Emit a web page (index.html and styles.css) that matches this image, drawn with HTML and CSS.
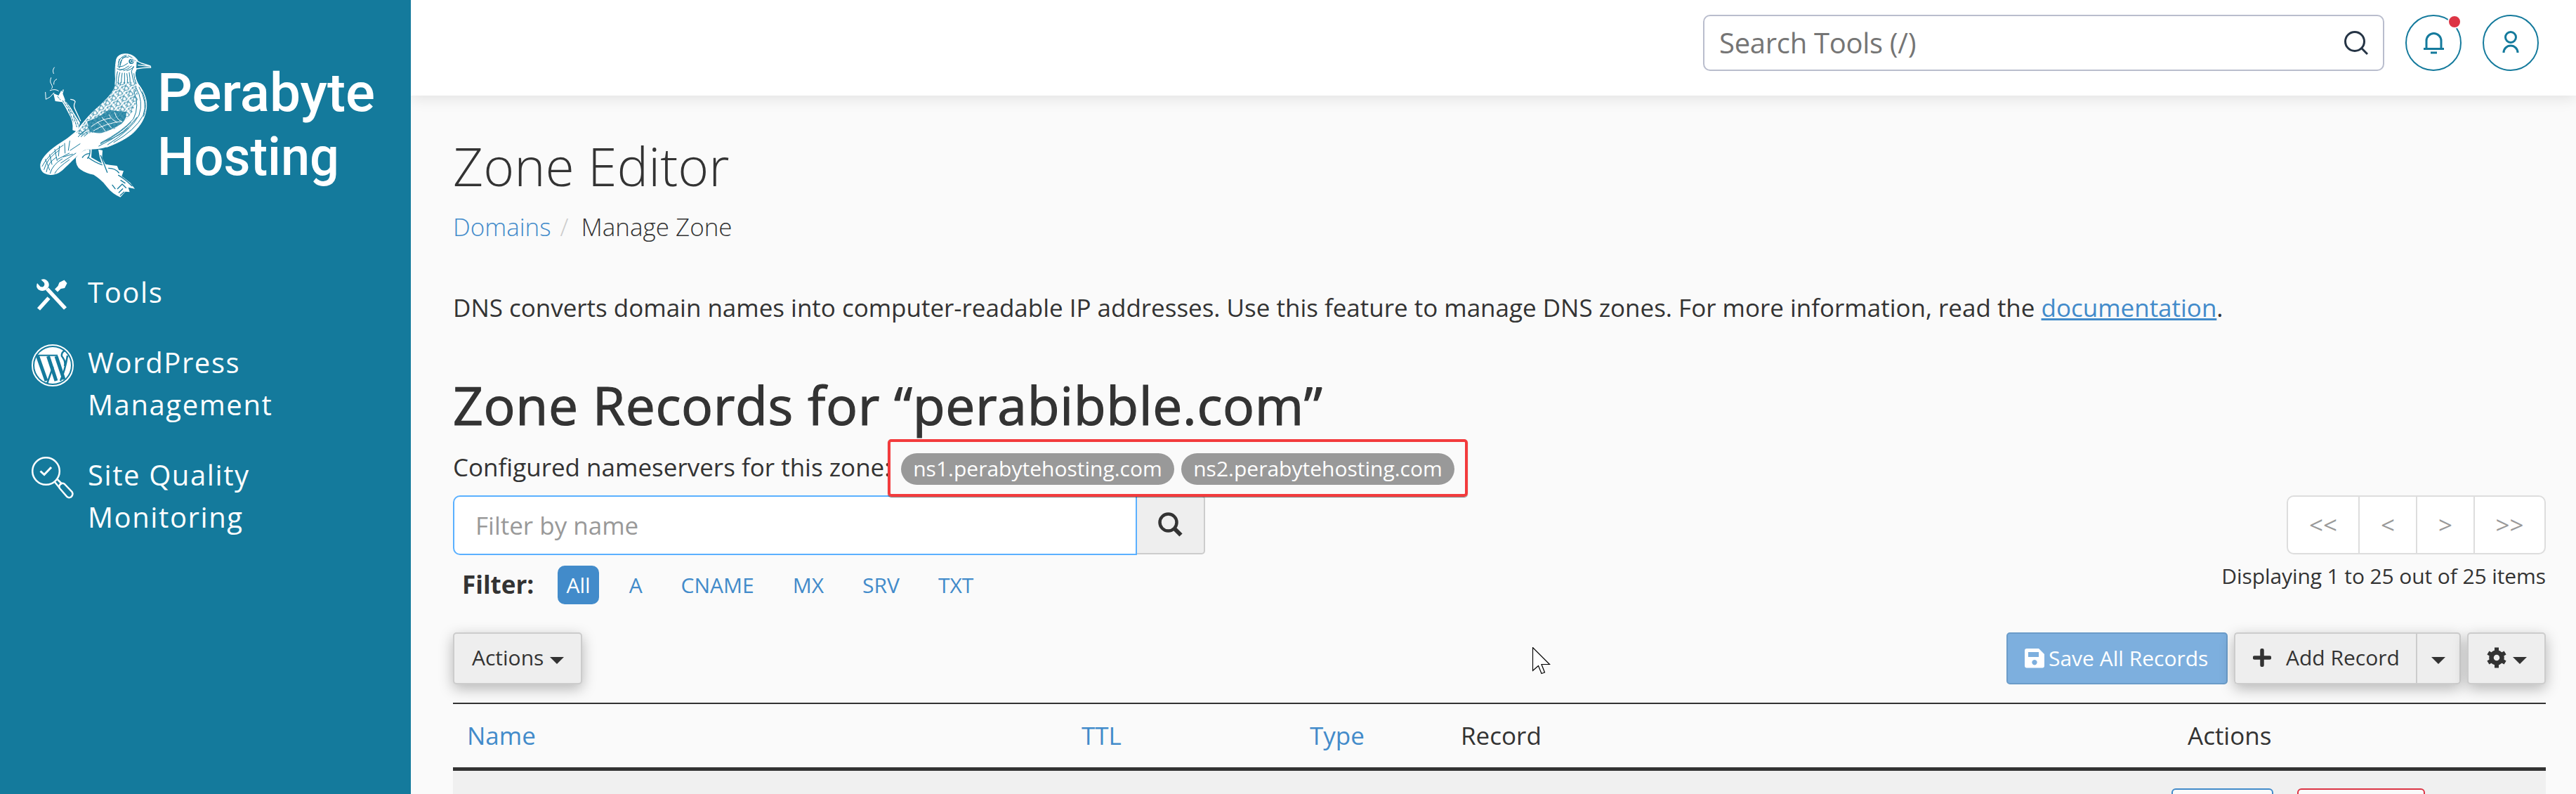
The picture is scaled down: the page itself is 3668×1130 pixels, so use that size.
FILE: index.html
```
<!DOCTYPE html>
<html lang="en">
<head>
<meta charset="utf-8">
<title>Zone Editor</title>
<link rel="stylesheet" href="styles.css">
</head>
<body>
<div class="app">
  <aside class="sidebar">
    <svg class="logo" viewBox="0 0 585 300" width="585" height="300" role="img" aria-label="Perabyte Hosting">
      <defs>
        <pattern id="feather" width="34" height="30" patternUnits="userSpaceOnUse" patternTransform="rotate(-38)">
          <path d="M1 4q8-6 15 1t15-2M3 13q6 5 12-1t14 4M0 22q9-5 14 2t17-1M9 0l-3 9M22 3l4 9M12 14l-4 10M27 15l-3 12" fill="none" stroke="#147a9c" stroke-width="2.6"/>
        </pattern>
        <clipPath id="body-clip">
          <path d="M346 20C346-2 366-10 388-10C412-9 428 3 438 18L438 50C424 66 426 84 440 118C466 152 482 190 474 230C466 278 438 306 424 322C398 348 350 372 306 388C262 404 222 392 206 404C180 424 160 446 130 474C110 496 86 510 60 506C34 504 20 488 22 462C28 428 66 396 110 368C140 350 154 338 176 318C200 288 230 250 262 222C296 190 326 164 338 134C344 104 342 60 346 20Z"/>
        </clipPath>
      </defs>
      <g transform="translate(50 80) scale(.33333)" stroke-linecap="round" stroke-linejoin="round">
        <g fill="none" stroke="#fff">
          <path d="M82 48q-10 12-3 26M68 92q-7 18 2 28 8 16 0 18M92 98q-14 6-12 22M44 154l2 30 18-10 16-18M64 146q22-8 36 2" stroke-width="3"/>
          <path d="M86 168l26 10 8-34M112 150l14 36M152 184q24 4 18 14-8 12 2 32l22 46" stroke-width="4"/>
        </g>
        <path d="M78 158L100 168 112 146 124 184Q152 218 162 236L192 284 180 322 160 316Q164 278 144 246Q130 218 116 196L86 192Z" fill="#fff"/>
        <path d="M96 172l12 14M118 190l38 56M128 190l46 78M142 228l22 52M164 256l14 46M176 270l10 28" stroke="#147a9c" stroke-width="3" fill="none" stroke-dasharray="9 5"/>
        <path d="M174 434Q188 410 220 398L242 396 240 432 286 458 318 464 350 468 358 486 378 490 370 512 406 540 426 566 398 560 404 580 386 578 364 602Q330 588 310 562Q288 530 250 506Q216 500 194 484Q172 470 174 434Z" fill="#fff"/>
        <path d="M234 400q2 24-10 36M226 432q30 22 60 32M202 432q10-14 28-16M314 478q28 0 44 20M356 508q30 18 58 46M352 566l20-20 16 16M358 582l16-16M364 594l16-14M366 530l18 12M330 550l12 16" stroke="#147a9c" stroke-width="4" fill="none"/>
        <path d="M270 398l18 4-2 32 20 38 18 50-26-28-22-62z" fill="#fff"/>
        <path d="M280 424l28 72" stroke="#147a9c" stroke-width="4"/>
        <g clip-path="url(#body-clip)">
          <rect x="10" y="-20" width="480" height="540" fill="#fff"/>
          <path d="M216 275Q260 220 320 160L340 110 430 110 440 180 410 250 340 310 230 330 200 340 176 326Z" fill="url(#feather)"/>
          <path d="M222 278Q270 264 312 230Q348 232 388 238Q394 266 370 288Q330 314 284 328Q250 330 232 318Z" fill="#147a9c" opacity=".8"/>
          <path d="M240 300q40-30 82-36M250 318q50-32 120-40M268 282q20 18 32 38M316 250q10 22 34 32M340 240q6 28 30 40M286 262q20 20 40 44" fill="none" stroke="#fff" stroke-width="3"/>
          <g fill="none" stroke="#147a9c" stroke-width="3">
            <path d="M352 66q-8 34-4 56M362 70q-10 30-6 50M372 72q-4 26-4 42M382 72v44M392 74q4 20 2 40M402 70q4 24 4 44M412 66q4 26 10 44M422 74q0 20 10 44"/>
            <path d="M432 136q32 56 12 116-34 62-134 126M444 132q38 64 18 120-34 64-126 116M422 150q26 62-2 118-50 56-140 102M458 152q26 56 6 104M434 262q-42 64-162 122M410 282q-46 48-130 92M398 306q-34 34-96 56"/>
            <path d="M356 26q8-26 34-30M362 36q4-28 26-34M356 46q22 0 40-16M362 60q20-4 38-18M378 62q16-4 34-20M392 62q16-4 30-16M398-2q20 6 30 22M360 12l-6 32M370 16l-10 34M350 54q14 6 30 2M372 8q12-10 26-4M420 44l-8 20"/>
            <path d="M188 332q22-4 42-30M184 344l24-24M196 344l22-20M210 342l16-14"/>
            <path d="M30 470q26-52 90-90M38 484q12-48 64-82M48 494q6-40 42-62M64 500q12-40 52-62M84 500q12-24 62-58M44 440l18 46M62 420l10 42M84 398l10 48M104 384l-4 42M126 372l2 42M148 362l-6 40M96 440l50-26M110 456l64-42M150 402l42-28M120 430l40-12"/>
          </g>
        </g>
        <path d="M346 124C340 70 342 48 346 20C350-2 366-10 388-10C412-9 428 3 438 18L436 28 432 54Q418 86 440 118C466 152 482 190 474 230C466 278 438 306 424 322C398 348 350 372 306 388" fill="none" stroke="#fff" stroke-width="3"/>
        <path d="M434 20l20 10 38 12 2 6-34 2-28 4" fill="#147a9c" stroke="#fff" stroke-width="4"/>
        <path d="M440 38q28 4 48 4" stroke="#fff" stroke-width="4"/>
        <circle cx="411" cy="22" r="13" fill="#147a9c" stroke="#fff" stroke-width="4"/>
        <circle cx="413" cy="21" r="6" fill="none" stroke="#fff" stroke-width="3"/>
      </g>
      <g class="logo-text">
        <text x="224" y="157.500" textLength="310" lengthAdjust="spacingAndGlyphs">Perabyte</text>
        <text x="224" y="248.500" textLength="259" lengthAdjust="spacingAndGlyphs">Hosting</text>
      </g>
    </svg>
    <nav class="nav">
      <a class="nav-item">
        <svg width="60" height="60" viewBox="0 0 60 60" fill="none">
          <path d="M22 21L48 49" stroke="#fff" stroke-width="5.500"/>
          <path d="M8 13Q5.500 18 9.500 22Q15 26 21 22Q27 17 23.500 11Q19.500 5.500 13.500 8L18 12.500Q19.500 16.500 15.500 18.500L12.500 18Z" fill="#fff"/>
          <path d="M24.500 34L10 50" stroke="#fff" stroke-width="5.500"/>
          <path d="M33 21.500L37.500 17 39.500 12 46.500 8.500 50.500 13 47 20 41.500 21 37 25.500Z" fill="#fff"/>
        </svg>
        <span>Tools</span>
      </a>
      <a class="nav-item">
        <svg width="60" height="60" viewBox="0 0 60 60">
          <circle cx="30" cy="30" r="29" fill="none" stroke="#fff" stroke-width="2"/>
          <circle cx="30" cy="30" r="26" fill="#fff"/>
          <g fill="none" stroke="#147a9c">
            <path d="M8.500 16.500L21 52M23.500 17L35 52M35 17L46 50" stroke-width="5"/>
            <path d="M6 15.800h15M19 15.800h18" stroke-width="2"/>
            <path d="M30.500 32L22 56M51 16Q48 36 41 52M47 9Q42 12 43 17Q49 24 47 31" stroke-width="2.500"/>
          </g>
        </svg>
        <span>WordPress Management</span>
      </a>
      <a class="nav-item">
        <svg width="60" height="60" viewBox="0 0 60 60" fill="none" stroke="#fff" stroke-width="2.500">
          <circle cx="20.500" cy="20.500" r="19.300"/>
          <path d="M12.500 20.500L18 25.500 28 15" stroke-width="3"/>
          <path d="M33 36L39.500 44M37 32.500L43.500 39"/>
          <path d="M40 45L50.500 57Q53 59 56 57.500Q60 54 57.500 50L46.500 38.500Q43.500 37 41 39Q38 42 40 45Z"/>
        </svg>
        <span>Site Quality Monitoring</span>
      </a>
    </nav>
  </aside>

  <div class="page">
    <header class="topbar">
      <div class="search">
        <span>Search Tools (/)</span>
        <svg width="34" height="34" viewBox="0 0 34 34" fill="none" stroke="#253445" stroke-width="3">
          <circle cx="15" cy="15" r="13.500"/><path d="M24.500 24.500L33 33"/>
        </svg>
      </div>
      <div class="round">
        <svg width="80" height="80" viewBox="0 0 80 80" fill="none" stroke="#147a9c" stroke-width="3">
          <path d="M30 48V37a10.500 10.500 0 0 1 21 0V48M26 48.500H55M36 54H45"/>
        </svg>
        <i class="dot"></i>
      </div>
      <div class="round">
        <svg width="80" height="80" viewBox="0 0 80 80" fill="none" stroke="#147a9c" stroke-width="3">
          <circle cx="40" cy="32" r="7.500"/><path d="M30 54a10 10 0 0 1 20 0"/>
        </svg>
      </div>
    </header>

    <main class="main">
      <h1>Zone Editor</h1>
      <div class="crumbs"><a>Domains</a><i>/</i><span>Manage Zone</span></div>
      <p class="intro">DNS converts domain names into computer-readable IP addresses. Use this feature to manage DNS zones. For more information, read the <a>documentation</a>.</p>
      <h2>Zone Records for “perabibble.com”</h2>
      <div class="servers">
        <span class="servers-label">Configured nameservers for this zone:</span>
        <div class="servers-list">
          <span class="pill">ns1.perabytehosting.com</span>
          <span class="pill">ns2.perabytehosting.com</span>
        </div>
      </div>

      <div class="find">
        <div class="find-group">
          <div class="find-input">Filter by name</div>
          <div class="find-btn">
            <svg width="36" height="36" viewBox="0 0 36 36" fill="none" stroke="#333">
              <circle cx="14.500" cy="14.500" r="12" stroke-width="4.500"/><path d="M23 23L32.500 32.500" stroke-width="6"/>
            </svg>
          </div>
        </div>
        <div class="pager"><span class="wide">&lt;&lt;</span><span>&lt;</span><span>&gt;</span><span class="wide">&gt;&gt;</span></div>
      </div>

      <div class="filters">
        <b>Filter:</b>
        <div class="filter-list"><a class="on">All</a><a>A</a><a>CNAME</a><a>MX</a><a>SRV</a><a>TXT</a></div>
        <span class="count">Displaying 1 to 25 out of 25 items</span>
      </div>

      <div class="toolbar">
        <div class="btn actions">Actions<i class="caret"></i></div>
        <div class="btn save">
          <svg width="28" height="28" viewBox="0 0 28 28"><path fill="#fff" fill-rule="evenodd" d="M3 0H20L28 8V24.500Q28 27.500 25 27.500H3Q0 27.500 0 24.500V3Q0 0 3 0ZM5 5V12H20V5ZM14 16a3.700 3.700 0 1 0 .01 0Z"/></svg>
          <span>Save All Records</span>
        </div>
        <div class="split">
          <div class="btn add">
            <svg width="26" height="26" viewBox="0 0 26 26"><path d="M2.500 13H23.500M13 2.500V23.500" stroke="#333" stroke-width="5.500" stroke-linecap="round"/></svg>
            <span>Add Record</span>
          </div>
          <div class="btn drop"><i class="caret"></i></div>
        </div>
        <div class="btn gear">
          <svg width="28" height="30" viewBox="0 -1 28 30">
            <g fill="none" stroke="#333"><circle cx="14" cy="14" r="7.500" stroke-width="6.500"/>
            <path d="M14 -.5V5M14 23V28.500M1.900 7L6.200 9.500M21.800 18.500L26.100 21M1.900 21L6.200 18.500M21.800 9.500L26.100 7" stroke-width="6"/></g>
          </svg>
          <i class="caret"></i>
        </div>
      </div>

      <div class="table">
        <div class="thead">
          <a>Name</a><a>TTL</a><a>Type</a><span>Record</span><span>Actions</span>
        </div>
        <div class="row"><div class="row-btn edit"></div><div class="row-btn delete"></div></div>
      </div>
    </main>
  </div>
</div>
<svg class="cursor" width="26" height="40" viewBox="0 0 26 40"><path d="M.5 .5V33.500L8.500 26.500 13 37.500 17.500 36 13 24.500H24.500Z" fill="#fff" stroke="#000" stroke-width="1.200"/></svg>
</body>
</html>
```
FILE: styles.css
```
* { box-sizing: border-box; }
html, body { margin: 0; height: 1130px; overflow: hidden; }
body { background: #fafafa; color: #333; font: 35px/50px "Open Sans", "Noto Sans", sans-serif; }
a { color: #428bca; }
h1, h2, p { margin: 0; }
i { font-style: normal; }
svg { display: block; flex: none; }

.app { display: flex; height: 1130px; }

/* Sidebar */
.sidebar { position: relative; z-index: 1; width: 585px; flex: none; background: #147a9c; color: #fff; }
.logo-text { fill: #fff; font: 500 76px Roboto, sans-serif; }
.nav { display: flex; flex-direction: column; gap: 40px; padding: 86px 45px 0; }
.nav-item { display: flex; gap: 20px; color: #fff; font-size: 40px; line-height: 60px; letter-spacing: 1.6px; }
.nav-item span { width: 300px; }
.nav-item svg { margin: 4px 0 -4px; }

/* Top bar */
.page { flex: 1; min-width: 0; }
.topbar { display: flex; justify-content: flex-end; align-items: flex-start; gap: 30px; height: 136px; padding: 21px 53px 0 0; background: #fff; box-shadow: 0 4px 20px rgba(0, 0, 0, .1); }
.search { display: flex; align-items: center; justify-content: space-between; width: 970px; height: 80px; padding: 0 21px; border: 2px solid #b9bdcd; border-radius: 10px; color: #757575; font-size: 40px; letter-spacing: -.3px; }
.round { position: relative; width: 80px; height: 80px; border: 2px solid #147a9c; border-radius: 50%; }
.round svg { margin: -2px; }
.dot { position: absolute; top: -2px; right: -2px; width: 20px; height: 20px; border: 2px solid #fff; border-radius: 50%; background: #dc3545; }

/* Content */
.main { padding: 59px 43px 0 60px; }
h1 { font-size: 75px; line-height: 82px; font-weight: 300; }
.crumbs { display: flex; margin-top: 21px; font-weight: 300; }
.crumbs i { color: #ccc; padding: 0 18px 0 13px; }
.intro { margin-top: 65px; letter-spacing: -.015px; }
.intro a { text-decoration: underline; }
h2 { margin-top: 72px; font-size: 75px; line-height: 82px; font-weight: 400; letter-spacing: .63px; -webkit-text-stroke: 1.2px #333; }
.servers { display: flex; height: 88px; padding-top: 8px; }
.servers-label { width: 619px; padding-top: 15px; white-space: nowrap; }
.servers-list { display: flex; gap: 10px; width: 826px; height: 82px; padding: 16px 15px; border: 4px solid #f33b3d; border-radius: 5px; box-shadow: 0 1px 1px rgba(0, 0, 0, .5); position: relative; z-index: 1; }
.pill { width: 389px; height: 45px; border-radius: 23px; background: #999; color: #fff; font-size: 30px; line-height: 44px; text-align: center; }

.find { display: flex; justify-content: space-between; height: 85px; }
.find-group { display: flex; }
.find-input { width: 974px; height: 85px; padding-left: 30px; border: 2px solid #5ab0ff; border-radius: 10px 0 0 10px; background: #fff; color: #999; line-height: 82px; }
.find-btn { display: flex; align-items: center; justify-content: center; width: 97px; height: 84px; border: 2px solid #ccc; border-left: 0; border-radius: 0 5px 5px 0; background: #eee; }
.pager { display: flex; height: 84px; border: 2px solid #ddd; border-radius: 10px; background: #fff; color: #999; font-size: 35px; line-height: 80px; text-align: center; }
.pager span { width: 82px; border-left: 2px solid #ddd; }
.pager .wide { width: 101px; }
.pager span:first-child { width: 100px; border-left: 0; }

.filters { display: flex; align-items: center; height: 55px; margin-top: 15px; }
.filters b { width: 149px; padding-left: 13px; margin-top: -2px; }
.filter-list { display: flex; gap: 30px; }
.filter-list a { padding: 0 12.5px; border-radius: 10px; font-size: 30px; line-height: 55px; }
.filter-list .on { background: #428bca; color: #fff; }
.count { margin-left: auto; font-size: 30px; letter-spacing: -.1px; padding-bottom: 25px; }

.toolbar { display: flex; margin-top: 40px; height: 74px; }
.btn { display: flex; align-items: center; height: 74px; padding-bottom: 2px; border: 2px solid #ccc; border-radius: 5px; background: #eee; font-size: 30px; line-height: 68px; box-shadow: 0 6px 20px rgba(0, 0, 0, .28); white-space: nowrap; }
.caret { width: 0; height: 0; margin-top: 7px; border: 10px solid transparent; border-top-color: #333; border-bottom: 0; }
.actions { gap: 9px; width: 184px; padding-left: 25px; margin-right: auto; }
.save { gap: 6px; width: 315px; padding: 0 0 0 24px; border-color: #6b9cc9; background: #7dafde; color: #fff; box-shadow: none; }
.split { display: flex; margin-left: 9px; border-radius: 5px; box-shadow: 0 6px 20px rgba(0, 0, 0, .28); }
.split .btn { box-shadow: none; }
.add { gap: 21px; width: 259px; padding-left: 25px; border-radius: 5px 0 0 5px; border-right: 0; }
.drop { width: 64px; justify-content: center; border-radius: 0 5px 5px 0; }
.gear { gap: 9px; width: 112px; margin-left: 9px; padding-left: 26px; }

/* Records table */
.table { margin-top: 26px; border-top: 2px solid #333; }
.thead { display: grid; grid-template-columns: 875px 325px 215px 1035px 1fr; height: 95px; padding-left: 20px; border-bottom: 5px solid #333; line-height: 90px; }
.row { display: flex; gap: 34px; height: 33px; padding: 25px 0 0 2447px; background: #f0f0f0; overflow: hidden; }
.row-btn { height: 74px; border: 2px solid #428bca; border-radius: 6px; background: #fafafa; }
.edit { width: 145px; }
.delete { width: 182px; border-color: #dc3545; }

.cursor { position: absolute; left: 2182px; top: 921px; }
```
